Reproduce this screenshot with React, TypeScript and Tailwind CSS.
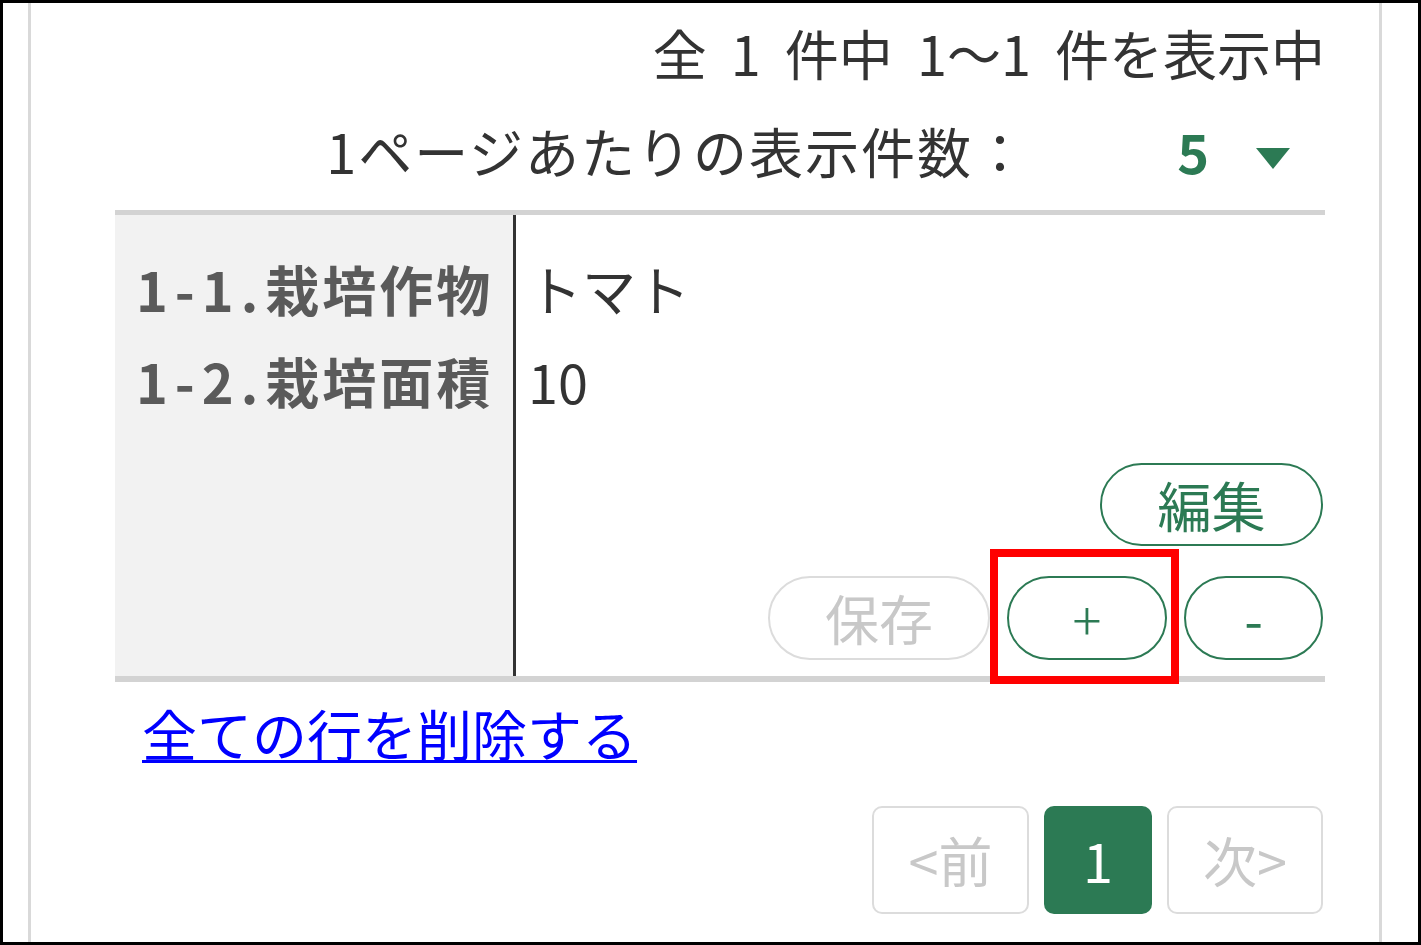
export default function App() {
  return (
    <div className="w-[1421px] h-[945px] border-[3px] border-black bg-white overflow-hidden font-['Noto_Sans_CJK_JP','Noto_Sans',sans-serif]">
      <div className="ml-[25px] w-[1354px] h-full border-x-[3px] border-[#d9d9d9] pl-[84px] pr-[54px] pt-[23px]">
        {/* counts */}
        <div className="text-right text-[54px] leading-none text-[#333] [word-spacing:12px]">全 1 件中 1〜1 件を表示中</div>
        <div className="mt-[44px] flex items-center justify-end text-[54px] leading-none text-[#333]">
          <span className="tracking-[2px]">1ページあたりの表示件数：</span>
          <span className="ml-[148px] font-bold text-[#2c7a54]">5</span>
          <span className="ml-[47px] mr-[35px] w-0 h-0 border-x-[17px] border-x-transparent border-t-[21px] border-t-[#2c7a54] mt-[14px]" />
        </div>

        {/* record */}
        <div className="mt-[32px] flex border-t-[5px] border-b-[6px] border-[#d3d3d3]">
          <div className="w-[401px] bg-[#f2f2f2] border-r-[3px] border-[#333] pl-[21px] pt-[28px] text-[54px] leading-[92px] font-bold text-[#5a5a5a]">
            <div><span className="tracking-[7px]">1-1.</span><span className="tracking-[3px]">栽培作物</span></div>
            <div><span className="tracking-[7px]">1-2.</span><span className="tracking-[3px]">栽培面積</span></div>
          </div>
          <div className="flex-1 pt-[28px] pb-[16px] pr-[2px]">
            <div className="pl-[12px] text-[54px] leading-[92px] text-[#333]">
              <div>トマト</div>
              <div>10</div>
            </div>
            <div className="mt-[36px] flex justify-end">
              <button className="w-[223px] h-[83px] rounded-full border-2 border-[#2c7a54] text-[54px] leading-none text-[#2c7a54]">編集</button>
            </div>
            <div className="mt-[30px] flex justify-end gap-[17px]">
              <button className="w-[222px] h-[84px] rounded-full border-2 border-[#dcdcdc] text-[54px] leading-none text-[#c8c8c8]">保存</button>
              <div className="relative">
                <button className="w-[160px] h-[84px] rounded-full border-2 border-[#2c7a54] text-[54px] font-light leading-none text-[#2c7a54]">+</button>
                <span className="absolute left-[-17px] top-[-27px] w-[189px] h-[135px] border-[8px] border-[#ff0000]" />
              </div>
              <button className="w-[139px] h-[84px] rounded-full border-2 border-[#2c7a54] text-[54px] leading-none text-[#2c7a54]">-</button>
            </div>
          </div>
        </div>

        {/* delete all */}
        <div className="mt-[23px] pl-[27px]">
          <a href="#" className="text-[55px] leading-none text-[#0000ff] underline decoration-[3px] underline-offset-[4px]">全ての行を削除する</a>
        </div>

        {/* pager */}
        <div className="mt-[45px] mr-[2px] flex justify-end gap-[15px] text-[54px] leading-none">
          <span className="w-[157px] h-[108px] rounded-[10px] border-2 border-[#dcdcdc] text-[#c8c8c8] flex items-center justify-center">&lt;前</span>
          <span className="w-[108px] h-[108px] rounded-[10px] bg-[#2c7a54] text-white flex items-center justify-center">1</span>
          <span className="w-[156px] h-[108px] rounded-[10px] border-2 border-[#dcdcdc] text-[#c8c8c8] flex items-center justify-center">次&gt;</span>
        </div>
      </div>
    </div>
  );
}
